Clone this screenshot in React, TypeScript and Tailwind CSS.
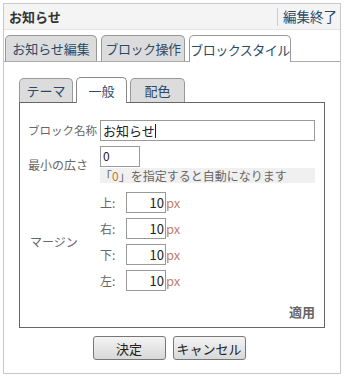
const font = { fontFamily: '"Noto Sans CJK JP", "Liberation Sans", sans-serif' };

const marginRows = ["上", "右", "下", "左"];

export default function App() {
  return (
    <div className="w-[344px] h-[379px] bg-white p-[3px] text-[12px] leading-none text-[#666] whitespace-nowrap" style={font}>
      <div className="h-[371px] border border-[#c8c8c8] flex flex-col">
        {/* header */}
        <div className="h-[26px] flex items-center bg-[#f4f4f4] border-b border-[#e4e4e4]">
          <div className="flex-1 pl-[5px] font-bold text-[13px] text-[#333]">お知らせ</div>
          <div className="h-[18px] border-l border-[#ccc] pl-[5px] pr-[3px] flex items-center text-[#2a4a6a] text-[13.5px]">編集終了</div>
        </div>

        {/* outer tabs */}
        <div className="flex items-end h-[31px] pl-[1px] border-b border-[#aaa] gap-[4px] mt-[1px] text-[13px] text-[#2a4a6a]">
          <div className="h-[26px] w-[92px] flex items-center justify-center bg-[#dcdcdc] border border-b-0 border-[#999] rounded-t-[5px]">お知らせ編集</div>
          <div className="h-[26px] w-[84px] flex items-center justify-center bg-[#dcdcdc] border border-b-0 border-[#999] rounded-t-[5px] tracking-[-0.5px]">ブロック操作</div>
          <div className="h-[27px] w-[102px] -mb-px flex items-center justify-center bg-white border border-b-0 border-[#999] rounded-t-[5px] tracking-[-0.5px]">ブロックスタイル</div>
        </div>

        {/* inner */}
        <div className="pt-[14px] pl-[15px] pr-[15px]">
          <div className="flex items-end h-[26px] gap-[3px] text-[13px] text-[#2a4a6a]">
            <div className="h-[24px] w-[54px] flex items-center justify-center bg-[#dcdcdc] border border-b-0 border-[#999] rounded-t-[5px]">テーマ</div>
            <div className="h-[26px] w-[51px] -mb-px flex items-center justify-center bg-white border border-b-0 border-[#888] rounded-t-[5px] relative z-10">一般</div>
            <div className="h-[24px] w-[55px] flex items-center justify-center bg-[#dcdcdc] border border-b-0 border-[#999] rounded-t-[5px]">配色</div>
          </div>
          <div className="w-[306px] h-[226px] border border-[#666] flex flex-col pt-[17px] pl-[8px] pr-[9px]">
            <div className="flex items-center h-[21px]">
              <div className="w-[72px] text-[11.5px]">ブロック名称</div>
              <div className="flex-1 h-[21px] border border-[#999] flex items-center pl-[2px] text-[#222] text-[13px]">お知らせ<span className="w-px h-[14px] bg-[#222]" /></div>
            </div>
            <div className="flex mt-[5px]">
              <div className="w-[72px] pt-[13px]">最小の広さ</div>
              <div className="flex-1 flex flex-col">
                <div className="w-[40px] h-[21px] border border-[#999] pl-[2px] pt-[3px] text-[#222] text-[12px]">0</div>
                <div className="mt-[1px] h-[15px] bg-[#f0f0f0] flex items-center text-[12px] text-[#666]">「<span className="text-[#d07020]">0</span>」を指定すると自動になります</div>
              </div>
            </div>
            <div className="flex mt-[9px]">
              <div className="w-[72px] flex items-center pl-[2px]">マージン</div>
              <div className="flex flex-col gap-[5px]">
                {marginRows.map((r) => (
                  <div key={r} className="flex items-center h-[21px]">
                    <div className="w-[26px] text-[#666]">{r}:</div>
                    <div className="w-[40px] h-[21px] border border-[#999] flex items-center justify-end pr-[1px] text-[#222] text-[13px]">10</div>
                    <div className="text-[#c08070] text-[13px]">px</div>
                  </div>
                ))}
              </div>
            </div>
            <div className="mt-auto mb-[9px] text-right font-bold text-[13px] text-[#666]">適用</div>
          </div>
        </div>

        {/* buttons */}
        <div className="flex justify-center gap-[7px] mt-[8px] pr-[6px] text-[13px]">
          <div className="w-[73px] h-[24px] border border-[#777] rounded-[3px] bg-gradient-to-b from-[#f4f4f4] to-[#d8d8d8] flex items-center justify-center text-[#222]">決定</div>
          <div className="w-[73px] h-[24px] border border-[#777] rounded-[3px] bg-gradient-to-b from-[#f4f4f4] to-[#d8d8d8] flex items-center justify-center text-[#222]">キャンセル</div>
        </div>
      </div>
    </div>
  );
}
